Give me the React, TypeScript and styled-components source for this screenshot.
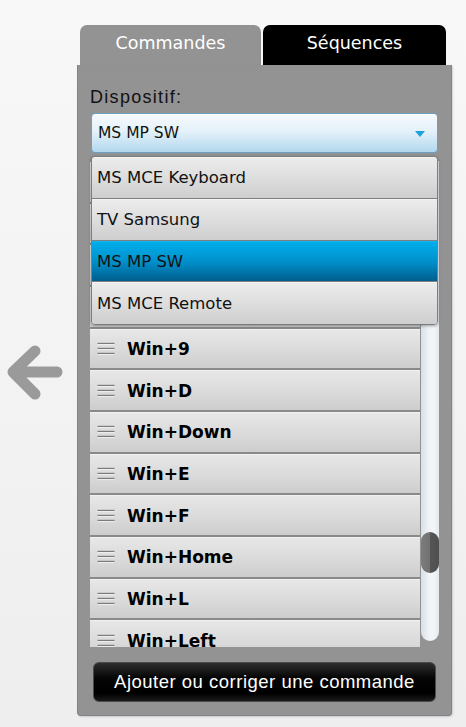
import React from 'react';
import styled, { createGlobalStyle } from 'styled-components';

const GlobalStyle = createGlobalStyle`
  html, body {
    margin: 0;
    padding: 0;
  }
  body {
    min-height: 727px;
    background: linear-gradient(180deg, #f8f8f8 0%, #eeeeee 100%);
    font-family: "DejaVu Sans", Verdana, sans-serif;
  }
`;

const Page = styled.div`
  display: flex;
  padding-top: 25px;
`;

const BackArrow = styled.div`
  width: 64px;
  margin: 315px 13px 0 0;
  cursor: pointer;
`;

const Column = styled.div`
  width: 375px;
  display: flex;
  flex-direction: column;
`;

const TabBar = styled.div`
  display: flex;
  gap: 2px;
  padding-left: 3px;
  height: 40px;
`;

const Tab = styled.div<{ $active?: boolean; $w: number }>`
  width: ${(p) => p.$w}px;
  box-sizing: border-box;
  padding-top: 7px;
  line-height: 22px;
  text-align: center;
  font-size: 17.5px;
  color: #fff;
  background: ${(p) => (p.$active ? '#939393' : '#000')};
  border-radius: 7px 7px 0 0;
`;

const Panel = styled.div`
  background: #939393;
  border: 1px solid #80858b;
  border-top: none;
  border-radius: 0 0 4px 4px;
  box-shadow: 1px 1px 2px rgba(0, 0, 0, 0.15);
  padding: 21px 12px 13px 12px;
  display: flex;
  flex-direction: column;
`;

const Label = styled.div`
  font-family: "Liberation Sans", Arial, sans-serif;
  font-size: 18px;
  letter-spacing: 1.3px;
  line-height: 22px;
  color: #111;
  margin-bottom: 5px;
`;

const SelectWrap = styled.div`
  position: relative;
  margin: 0 1px;
`;

const SelectBox = styled.div`
  height: 40px;
  box-sizing: border-box;
  display: flex;
  align-items: center;
  justify-content: space-between;
  padding: 0 12px 0 6px;
  border: 1px solid #6c9fc2;
  border-radius: 4px;
  background: linear-gradient(180deg, #f6fafd 0%, #e4f1f9 45%, #b3d8ee 100%);
  box-shadow: inset 0 1px 0 #fff;
  font-size: 15.5px;
  color: #111;
`;

const Caret = styled.span`
  width: 0;
  height: 0;
  border-left: 5px solid transparent;
  border-right: 5px solid transparent;
  border-top: 6px solid #1ea1dc;
  margin-top: 2px;
`;

const Dropdown = styled.div`
  position: absolute;
  top: 43px;
  left: 0;
  width: 347px;
  box-sizing: border-box;
  border: 1px solid #7d7d7d;
  border-radius: 4px;
  overflow: hidden;
  box-shadow: 0 1px 3px rgba(0, 0, 0, 0.35);
  z-index: 5;
`;

const Option = styled.div<{ $selected?: boolean }>`
  height: 41.75px;
  box-sizing: border-box;
  display: flex;
  align-items: center;
  padding-left: 5px;
  font-size: 16.5px;
  color: #111;
  border-top: 1px solid ${(p) => (p.$selected ? '#12b4ef' : '#f4f4f4')};
  border-bottom: 1px solid #7f7f7f;
  background: ${(p) =>
    p.$selected
      ? 'linear-gradient(180deg, #00aeea 0%, #0090cc 50%, #005e8c 100%)'
      : 'linear-gradient(180deg, #ececec 0%, #dcdcdc 55%, #cecece 100%)'};
  &:last-child {
    border-bottom: none;
  }
`;

const ListArea = styled.div`
  display: flex;
  gap: 1px;
  margin-top: 8px;
  height: 486px;
`;

const Rows = styled.div`
  width: 330px;
  overflow: hidden;
  padding-top: 1px;
`;

const Row = styled.div`
  height: 41.67px;
  box-sizing: border-box;
  display: flex;
  align-items: center;
  gap: 12px;
  padding-left: 7px;
  border-top: 1px solid #f1f1f1;
  border-bottom: 2px solid #8a8a8a;
  background: linear-gradient(180deg, #e7e7e7 0%, #dadada 55%, #cdcdcd 100%);
`;

const RowText = styled.span`
  font-weight: bold;
  font-size: 17px;
  color: #000;
`;

const Track = styled.div`
  width: 18px;
  height: 480px;
  border-radius: 0 0 9px 9px;
  background: linear-gradient(90deg, #d9dfe6 0%, #eef2f6 40%, #f3f6f9 70%, #e3e8ee 100%);
`;

const Thumb = styled.div`
  height: 41px;
  border-radius: 9px;
  background: linear-gradient(90deg, #7c7c7c 0%, #727272 48%, #555 52%, #4f4f4f 100%);
`;

const ActionButton = styled.button`
  margin: 15px 3px 0 3px;
  height: 40px;
  border: 1px solid #4a4a4a;
  border-radius: 6px;
  background: linear-gradient(180deg, #2e2e2e 0%, #050505 40%, #000 80%, #1a1a1a 100%);
  color: #fff;
  font-family: "Liberation Sans", Arial, sans-serif;
  font-size: 18.5px;
  letter-spacing: 0.5px;
  cursor: pointer;
`;

const devices = ['MS MCE Keyboard', 'TV Samsung', 'MS MP SW', 'MS MCE Remote'];

// the first four rows sit under the open dropdown
const commands = [
  'Win+5',
  'Win+6',
  'Win+7',
  'Win+8',
  'Win+9',
  'Win+D',
  'Win+Down',
  'Win+E',
  'Win+F',
  'Win+Home',
  'Win+L',
  'Win+Left',
];

const Handle = () => (
  <svg width="18" height="14" viewBox="0 0 18 14">
    {[2, 7, 12].map((y) => (
      <g key={y}>
        <line x1="0.5" y1={y - 0.6} x2="17.5" y2={y - 0.6} stroke="#7c7c7c" strokeWidth="1.2" />
        <line x1="0.5" y1={y + 0.6} x2="17.5" y2={y + 0.6} stroke="#f4f4f4" strokeWidth="0.8" />
      </g>
    ))}
  </svg>
);

const App: React.FC = () => {
  const selected = 'MS MP SW';
  const thumbOffset = 371;

  return (
    <>
      <GlobalStyle />
      <Page>
        <BackArrow>
          <svg width="64" height="66" viewBox="0 0 64 66">
            <path
              d="M57 32 H14 M35 11 L13 32 L35 54"
              fill="none"
              stroke="#9a9a9a"
              strokeWidth="11"
              strokeLinecap="round"
              strokeLinejoin="round"
            />
          </svg>
        </BackArrow>
        <Column>
          <TabBar>
            <Tab $active $w={181}>Commandes</Tab>
            <Tab $w={183}>Séquences</Tab>
          </TabBar>
          <Panel>
            <Label>Dispositif:</Label>
            <SelectWrap>
              <SelectBox>
                <span>{selected}</span>
                <Caret />
              </SelectBox>
              <Dropdown>
                {devices.map((d) => (
                  <Option key={d} $selected={d === selected}>
                    {d}
                  </Option>
                ))}
              </Dropdown>
            </SelectWrap>
            <ListArea>
              <Rows>
                {commands.map((c) => (
                  <Row key={c}>
                    <Handle />
                    <RowText>{c}</RowText>
                  </Row>
                ))}
              </Rows>
              <Track>
                <Thumb style={{ marginTop: thumbOffset }} />
              </Track>
            </ListArea>
            <ActionButton>Ajouter ou corriger une commande</ActionButton>
          </Panel>
        </Column>
      </Page>
    </>
  );
};

export default App;
